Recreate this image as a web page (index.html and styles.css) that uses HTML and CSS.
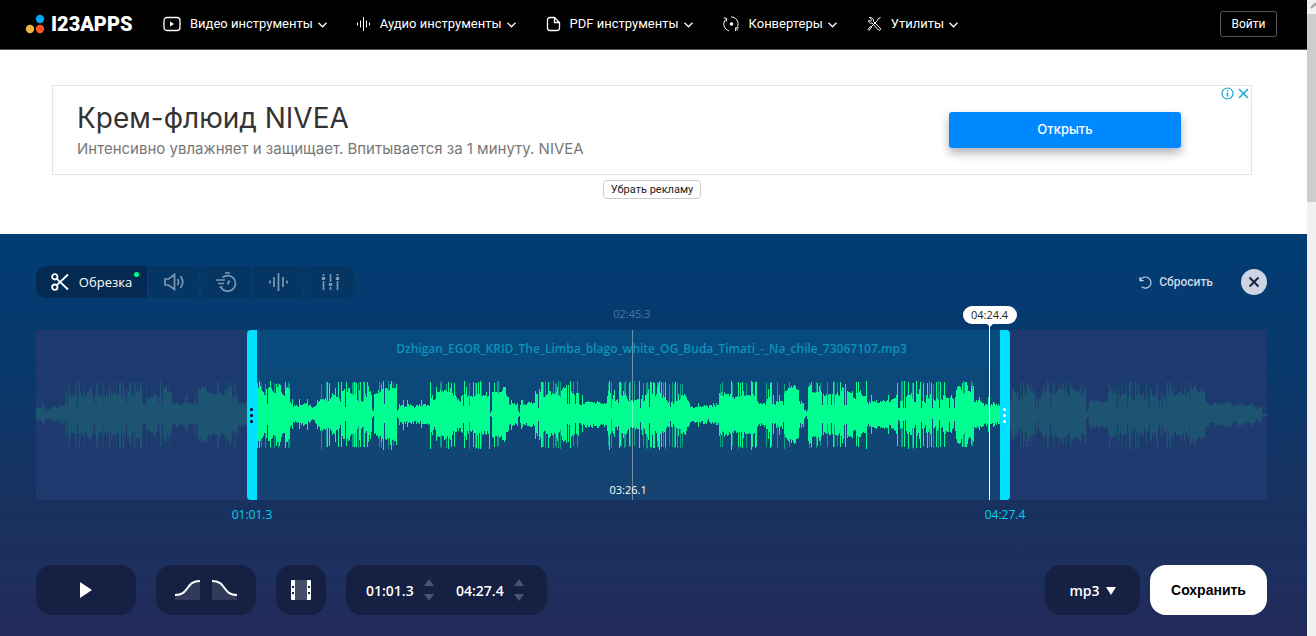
FILE: index.html
```html
<!DOCTYPE html>
<html lang="ru">
<head>
<meta charset="utf-8">
<title>123APPS</title>
<link rel="stylesheet" href="styles.css">
</head>
<body>
<div class="page">
  <header class="topbar">
    <a class="logo" href="#">
      <svg width="20" height="20" viewBox="0 0 20 20"><circle cx="15" cy="5" r="4.2" fill="#03a9f4"/><circle cx="5" cy="15" r="4.2" fill="#eab543"/><circle cx="15" cy="15" r="4.2" fill="#ff5722"/></svg>
      <span>I23APPS</span>
    </a>
    <nav class="menu">
      <a href="#" class="menu-item">
        <svg class="menu-icon" width="18" height="16" viewBox="0 0 18 16"><rect x="1" y="1.5" width="16" height="13" rx="3" class="line"/><path d="M7 5.5v5l4-2.5z" fill="#fff"/></svg>
        <span>Видео инструменты</span>
        <svg class="chev" width="9" height="6" viewBox="0 0 9 6"><path d="M.5 .8l4 4 4-4" class="line"/></svg>
      </a>
      <a href="#" class="menu-item">
        <svg class="menu-icon" width="14" height="16" viewBox="0 0 14 16"><path d="M.5 6.5v3M3.500 4.500v7M6.500 1v14M9.500 4.500v7M12.500 6.500v3" class="line thin"/></svg>
        <span>Аудио инструменты</span>
        <svg class="chev" width="9" height="6" viewBox="0 0 9 6"><path d="M.5 .8l4 4 4-4" class="line"/></svg>
      </a>
      <a href="#" class="menu-item">
        <svg class="menu-icon" width="15" height="16" viewBox="0 0 15 16"><path d="M8.500 1.500H4A2.500 2.500 0 0 0 1.500 4v8A2.500 2.500 0 0 0 4 14.500h7a2.500 2.500 0 0 0 2.500-2.500V6.500zM8.500 1.500v5h5" class="line"/></svg>
        <span>PDF инструменты</span>
        <svg class="chev" width="9" height="6" viewBox="0 0 9 6"><path d="M.5 .8l4 4 4-4" class="line"/></svg>
      </a>
      <a href="#" class="menu-item">
        <svg class="menu-icon" width="17" height="16" viewBox="0 0 17 16"><path d="M8 .9a7 7 0 0 1 6.500 9.800M6 14.800A7 7 0 0 1 2.500 3.500M.8 1.800l3 .7-.6 3M12.600 15v-3.200h3.200M12.500 12l2.500 2.500" class="line thin"/><circle cx="8.500" cy="8" r="1.800" fill="#fff"/></svg>
        <span>Конвертеры</span>
        <svg class="chev" width="9" height="6" viewBox="0 0 9 6"><path d="M.5 .8l4 4 4-4" class="line"/></svg>
      </a>
      <a href="#" class="menu-item">
        <svg class="menu-icon" width="15" height="16" viewBox="0 0 15 16"><path d="M13.500 1.500L11 3l-.5 1.500-7 7M3.500 10.500l1 1-2.500 3-1-1zM2.500 1.500l2 2-.8 1.600-2-.6C1.500 6.500 3 7.500 5 7l6.500 7c1.200 1 2.800-.5 1.700-1.800L6.500 5.500C7 3.500 5 1 2.500 1.500" class="line thin"/></svg>
        <span>Утилиты</span>
        <svg class="chev" width="9" height="6" viewBox="0 0 9 6"><path d="M.5 .8l4 4 4-4" class="line"/></svg>
      </a>
    </nav>
    <button class="login">Войти</button>
  </header>

  <section class="ad-zone">
    <div class="ad">
      <div class="ad-text">
        <h2>Крем-флюид NIVEA</h2>
        <p>Интенсивно увлажняет и защищает. Впитывается за 1 минуту. NIVEA</p>
      </div>
      <a class="ad-open" href="#">Открыть</a>
      <div class="ad-marks">
        <button aria-label="Информация"><svg width="13" height="13" viewBox="0 0 13 13"><circle cx="6.500" cy="6.500" r="5.500" fill="none" stroke="#1aa5d8" stroke-width="1.200"/><path d="M6.500 5.500v4M6.500 3.200v1.300" stroke="#1aa5d8" stroke-width="1.500"/></svg></button>
        <button aria-label="Закрыть рекламу"><svg width="11" height="11" viewBox="0 0 11 11"><path d="M1 1l9 9M10 1l-9 9" stroke="#1aa5d8" stroke-width="1.500"/></svg></button>
      </div>
    </div>
    <button class="ad-remove">Убрать рекламу</button>
  </section>

  <main class="editor">
    <div class="tools">
      <div class="tabs">
        <button class="tab tab-active">
          <svg width="18" height="18" viewBox="0 0 18 18" fill="none" stroke="#fff" stroke-width="1.800"><circle cx="3.800" cy="3.800" r="2.700"/><circle cx="3.800" cy="14.200" r="2.700"/><path d="M5.800 5.800L17 16.500M5.800 12.200L17 1.500"/></svg>
          <span>Обрезка</span><i class="dot"></i>
        </button>
        <button class="tab" aria-label="Громкость"><svg width="21" height="18" viewBox="0 0 21 18" class="tool-line"><path d="M1 6v6h3.500L10.500 16.500v-15L4.500 6zM13.500 6q2 3 0 6M16.500 3q4.500 6 0 12"/></svg></button>
        <button class="tab" aria-label="Скорость"><svg width="21" height="20" viewBox="0 0 21 20" class="tool-line"><path d="M6.500 5.500A7.800 7.800 0 1 1 5 15.500M9 1h5M0 8h9M2 11.500h6M13.500 8.500l-2 4M3.500 15h3"/></svg></button>
        <button class="tab" aria-label="Тон"><svg width="19" height="18" viewBox="0 0 19 18" class="tool-line"><path d="M1 7.500v3M5 4v10M9.500 0v18M14 4v10M18 7.500v3"/></svg></button>
        <button class="tab" aria-label="Эквалайзер"><svg width="19" height="18" viewBox="0 0 19 18" class="tool-line"><path d="M2.500 1v2M2.500 8v9M9.500 1v8M9.500 14v3M16.500 1v2M16.500 8v9"/><path d="M.8 5.500h3.400M7.800 11.500h3.400M14.800 5.500h3.400" stroke-width="3"/></svg></button>
      </div>
      <button class="reset">
        <svg width="13" height="13" viewBox="0 0 14 14" fill="none" stroke="#ccd8e3" stroke-width="1.200"><path d="M1 1v4h4M1.300 4.800A6 6 0 1 1 2.800 11.500"/></svg>
        Сбросить
      </button>
      <button class="close" aria-label="Закрыть"><svg width="12" height="12" viewBox="0 0 12 12"><path d="M1.500 1.500l9 9M10.500 1.500l-9 9" stroke="#1a2448" stroke-width="2"/></svg></button>
    </div>

    <div class="track">
      <svg class="wave" viewBox="0 0 1231 170" preserveAspectRatio="none" aria-hidden="true"><path id="wave-soft"/><path id="wave-body"/></svg>
      <div class="filename">Dzhigan_EGOR_KRID_The_Limba_blago_white_OG_Buda_Timati_-_Na_chile_73067107.mp3</div>
      <div class="shade shade-start"></div>
      <div class="shade shade-end"></div>
      <div class="cursor"></div>
      <span class="cursor-time">02:45.3</span>
      <span class="length">03:26.1</span>
      <div class="handle handle-start"><i></i><i></i><i></i></div>
      <div class="handle handle-end"><i></i><i></i><i></i></div>
      <span class="edge edge-start">01:01.3</span>
      <span class="edge edge-end">04:27.4</span>
      <div class="playhead"></div>
      <span class="playhead-time">04:24.4</span>
    </div>

    <div class="controls">
      <button class="box play" aria-label="Воспроизвести"><svg width="12" height="16" viewBox="0 0 12 16"><path d="M0 0v16l12-8z" fill="#fff"/></svg></button>
      <div class="box fades">
        <button aria-label="Нарастание"><svg width="25" height="20" viewBox="0 0 25 20"><path d="M0 15C15 15 10 1 25 1V20H0z" fill="#fff" fill-opacity=".12"/><path d="M0 15C15 15 10 1 25 1" fill="none" stroke="#fff" stroke-width="2"/></svg></button>
        <button aria-label="Затухание"><svg width="25" height="20" viewBox="0 0 25 20"><path d="M0 1C15 1 10 15 25 15V20H0z" fill="#fff" fill-opacity=".12"/><path d="M0 1C15 1 10 15 25 15" fill="none" stroke="#fff" stroke-width="2"/></svg></button>
      </div>
      <button class="box film" aria-label="Вырезать"><svg width="20" height="20" viewBox="0 0 20 20"><path d="M4 0h12v20H4z" fill="#464f6a"/><path d="M1 0h3v20H1a1 1 0 0 1-1-1V1a1 1 0 0 1 1-1zM16 0h3a1 1 0 0 1 1 1v18a1 1 0 0 1-1 1h-3z" fill="#fff"/><path d="M1 6h2v2H1zM1 12h2v2H1zM17 6h2v2h-2zM17 12h2v2h-2z" fill="#152043"/></svg></button>
      <div class="box times">
        <input type="text" value="01:01.3" aria-label="Начало">
        <span class="spin"><button class="up" aria-label="Начало позже"></button><button class="down" aria-label="Начало раньше"></button></span>
        <input type="text" value="04:27.4" aria-label="Конец">
        <span class="spin"><button class="up" aria-label="Конец позже"></button><button class="down" aria-label="Конец раньше"></button></span>
      </div>
      <div class="box format">
        <select aria-label="Формат"><option>mp3</option><option>wav</option></select>
        <i class="caret"></i>
      </div>
      <button class="save">Сохранить</button>
    </div>
  </main>
</div>
<div class="scrollbar" aria-hidden="true">
  <svg width="9" height="14" viewBox="0 0 9 14"><path d="M4 8l4-4 4 4" fill="none" stroke="#a0a0a0" stroke-width="2"/></svg>
  <div class="thumb"></div>
</div>
<script src="wave.js"></script>
</body>
</html>
```
FILE: styles.css
```css
* { box-sizing: border-box; }
body { margin: 0; display: flex; min-height: 100vh; background: #fff; font-family: "Open Sans", "Noto Sans", sans-serif; overflow: hidden; }
button { padding: 0; border: 0; background: none; font: inherit; color: inherit; cursor: pointer; }
a { color: inherit; text-decoration: none; }
svg { display: block; flex: none; }
.page { flex: 1; min-width: 0; display: flex; flex-direction: column; }

.topbar { display: flex; align-items: center; height: 50px; padding: 0 30px 2px 25px; background: #000; border-bottom: 1px solid #555; color: #fff; font-family: Roboto, sans-serif; font-size: 13px; }
.logo { display: flex; align-items: center; gap: 6px; width: 138px; font: 900 20px/24px Roboto, sans-serif; }
.menu { display: flex; gap: 30px; flex: 1; }
.menu-item { display: flex; align-items: center; white-space: nowrap; }
.menu-icon { margin-right: 9px; }
.chev { margin: 2px 0 0 5px; }
.line { fill: none; stroke: #fff; stroke-width: 1.3; }
.thin { stroke-width: 1; }
.login { width: 57px; height: 26px; border: 1px solid #555; border-radius: 3px; font-size: 12px; }

.ad-zone { display: flex; flex-direction: column; align-items: center; gap: 5px; height: 184px; padding: 35px 55px 0 52px; }
.ad { position: relative; display: flex; align-items: center; justify-content: space-between; width: 100%; max-width: 1200px; height: 90px; padding: 0 70px 0 24px; border: 1px solid #e4e4e4; }
.ad-text h2 { margin: 2px 0 0; font: 400 28px/36px Inter, sans-serif; color: #333; }
.ad-text p { margin: 0; font: 400 15px/26px Inter, sans-serif; color: #777; }
.ad-open { width: 232px; height: 36px; border-radius: 3px; background: #08f; box-shadow: 0 5px 10px rgba(30, 30, 60, .35); color: #fff; font: 500 13px/34px Inter, sans-serif; text-align: center; }
.ad-marks { position: absolute; top: 1px; right: 2px; display: flex; align-items: center; gap: 4px; }
.ad-remove { height: 19px; padding: 0 7px; border: 1px solid #ccc; border-radius: 4px; color: #222; font: 11px/16px Roboto, sans-serif; }

.editor { flex: 1; padding: 32px 40px 20px 36px; background: linear-gradient(#003d74, #0a396c 35%, #19315f 68%, #1d2f5e 85%, #232a5a); color: #fff; }
.tools { display: flex; align-items: center; height: 32px; }
.tabs { display: flex; gap: 2px; border-radius: 10px; overflow: hidden; }
.tab { display: flex; align-items: center; justify-content: center; width: 50px; height: 32px; background: #053563; }
.tab-active { position: relative; gap: 10px; width: 111px; background: #042a52; font-size: 13px; }
.dot { position: absolute; top: 6px; right: 8px; width: 5px; height: 5px; border-radius: 50%; background: #00ff90; }
.tool-line { fill: none; stroke: #7d98b3; stroke-width: 1.7; }
.reset { display: flex; align-items: center; gap: 7px; margin-left: auto; color: #ccd8e3; font: 500 12px/18px Roboto, sans-serif; }
.close { display: flex; align-items: center; justify-content: center; width: 26px; height: 26px; margin-left: 28px; border-radius: 50%; background: #ccd5e1; }

.track { position: relative; height: 170px; margin-top: 32px; background: linear-gradient(#074b7e, #154270); font-size: 12px; line-height: 16px; }
.wave { position: absolute; inset: 0; width: 100%; height: 100%; fill: #00ff90; }
#wave-soft { opacity: .5; }
.filename { padding-top: 11px; color: #0c92bd; font-weight: 600; text-align: center; }
.shade { position: absolute; top: 0; bottom: 0; background: #21386c; opacity: .86; }
.shade-start { left: 0; width: 17.5%; }
.shade-end { right: 0; width: 21%; }
.handle { position: absolute; top: 0; bottom: 0; width: 10px; display: flex; flex-direction: column; align-items: center; justify-content: center; gap: 3px; background: #00e1ff; }
.handle i { width: 3px; height: 3px; border-radius: 50%; background: #000; }
.handle-start { left: 17.14%; border-radius: 4px 0 0 4px; }
.handle-end { left: 78.31%; border-radius: 0 4px 4px 0; }
.handle-end i { background: #fff; }
.edge { position: absolute; top: 177px; width: 60px; color: #00d2f0; text-align: center; }
.edge-start { left: 17.55%; margin-left: -30px; }
.edge-end { left: 78.72%; margin-left: -30px; }
.cursor { position: absolute; top: 0; bottom: 0; left: 48.4%; width: 1px; background: rgba(255, 255, 255, .4); }
.cursor-time { position: absolute; top: -24px; left: 48.4%; width: 60px; margin-left: -30px; color: #53749b; font-size: 11px; text-align: center; }
.length { position: absolute; bottom: 2px; left: 48.1%; width: 60px; margin-left: -30px; font-size: 11px; text-align: center; }
.playhead { position: absolute; top: -5px; bottom: 0; left: 77.42%; width: 1px; background: #fff; }
.playhead-time { position: absolute; top: -24px; left: 77.46%; width: 54px; height: 18px; margin-left: -27px; border-radius: 9px; background: #fff; color: #222; font-size: 11px; line-height: 18px; text-align: center; }
.playhead-time::after { content: ""; position: absolute; top: 17px; left: 23px; border: 4px solid transparent; border-top-color: #fff; border-bottom: 0; }

.controls { display: flex; gap: 20px; margin-top: 65px; }
.box { display: flex; align-items: center; justify-content: center; height: 50px; border-radius: 16px; background: #152043; }
.play, .fades { width: 100px; }
.fades { gap: 12px; }
.film { width: 50px; }
.times { justify-content: flex-start; width: 201px; padding-left: 20px; }
.times input { width: 58px; padding: 2px 0 0; border: 0; outline: 0; background: none; color: #fff; font: 600 14px/20px "Open Sans", sans-serif; }
.spin { display: flex; flex-direction: column; gap: 8px; width: 10px; }
.spin + input { margin-left: 22px; }
.up, .down { width: 0; border: 5px solid transparent; }
.up { border-top: 0; border-bottom: 7px solid #4a546e; }
.down { border-bottom: 0; border-top: 7px solid #4a546e; }
.format { gap: 5px; width: 95px; margin-left: auto; }
.format select { padding: 2px 0 0; border: 0; appearance: none; background: none; color: #fff; font: 600 14px/20px "Open Sans", sans-serif; }
.caret { margin-top: 2px; border: 5px solid transparent; border-top: 8px solid #fff; border-bottom: 0; }
.save { width: 117px; height: 50px; margin-left: -10px; border-radius: 16px; background: #fff; color: #000; font: 700 14px/20px "Liberation Sans", sans-serif; }

.scrollbar { width: 9px; background: #f1f1f1; }
.thumb { height: 188px; background: #cdcdcd; }
```
FILE: wave.js
```js
// Loudness sections: [start, end, body height, peak height]
const sections = [
  [0, 9, 8, 12], [9, 13, 3, 5], [13, 18, 6, 10], [18, 29, 8, 11], [29, 58, 13, 34],
  [58, 106, 17, 34], [106, 110, 10, 14], [110, 136, 16, 34], [136, 162, 9, 20],
  [162, 202, 17, 34], [202, 221, 12, 16], [221, 254, 18, 34], [254, 281, 9, 16],
  [281, 336, 13, 34], [336, 338, 5, 7], [338, 361, 18, 34], [361, 363, 5, 7],
  [363, 394, 8, 15], [394, 414, 12, 34], [414, 454, 15, 34], [454, 456, 3, 4],
  [456, 473, 14, 34], [473, 482, 10, 15], [482, 484, 3, 4], [484, 499, 10, 15],
  [499, 520, 12, 34], [520, 543, 19, 34], [543, 571, 9, 20], [571, 609, 11, 34],
  [609, 653, 13, 34], [653, 683, 8, 12], [683, 747, 10, 34], [747, 763, 17, 34],
  [763, 768, 11, 17], [768, 772, 3, 6], [772, 831, 17, 34], [831, 860, 12, 20],
  [860, 920, 12, 34], [920, 938, 18, 34], [938, 974, 10, 18], [974, 1004, 13, 34],
  [1004, 1050, 15, 34], [1050, 1053, 5, 6], [1053, 1072, 12, 17], [1072, 1130, 14, 34],
  [1130, 1169, 18, 34], [1169, 1195, 10, 19], [1195, 1217, 9, 14], [1217, 1226, 6, 9],
  [1226, 1231, 1, 1]
];

let seed = 71;
function random() {
  seed = (seed * 16807) % 2147483647;
  return seed / 2147483647;
}

const bar = (x, up, down) => `M${x} ${85 - up}h1V${85 + down}h-1z`;
let body = "";
let soft = "";
let swell = 0;
let target = 0;

for (const [start, end, low, peak] of sections) {
  const loud = peak > 30;
  for (let x = start; x < end; x++) {
    // A slow swell makes clumps a few columns wide
    if (x % 5 === 0) target = random();
    swell += (target - swell) * 0.5;
    let h = low - 2 + swell * (loud ? 13 : (peak - low) * 0.6) + random() * 3;
    const pick = random();
    if (loud && pick < 0.13) h = peak - random() * 2;
    else if (loud && pick < 0.28) h += random() * (peak - h) * 0.6;
    else if (loud && pick > 0.95) h = low * 0.6;
    else if (!loud && pick < 0.08) h = peak;
    if (loud && random() < 0.16) soft += bar(x, Math.round(peak - random() * 3), Math.round(peak - random() * 3));
    h = Math.max(1, Math.min(34, Math.round(h)));
    body += bar(x, h, Math.max(1, Math.round(h - random() * 3 + (h > 30 ? 1 : 0))));
  }
}
document.getElementById("wave-body").setAttribute("d", body);
document.getElementById("wave-soft").setAttribute("d", soft);
```
